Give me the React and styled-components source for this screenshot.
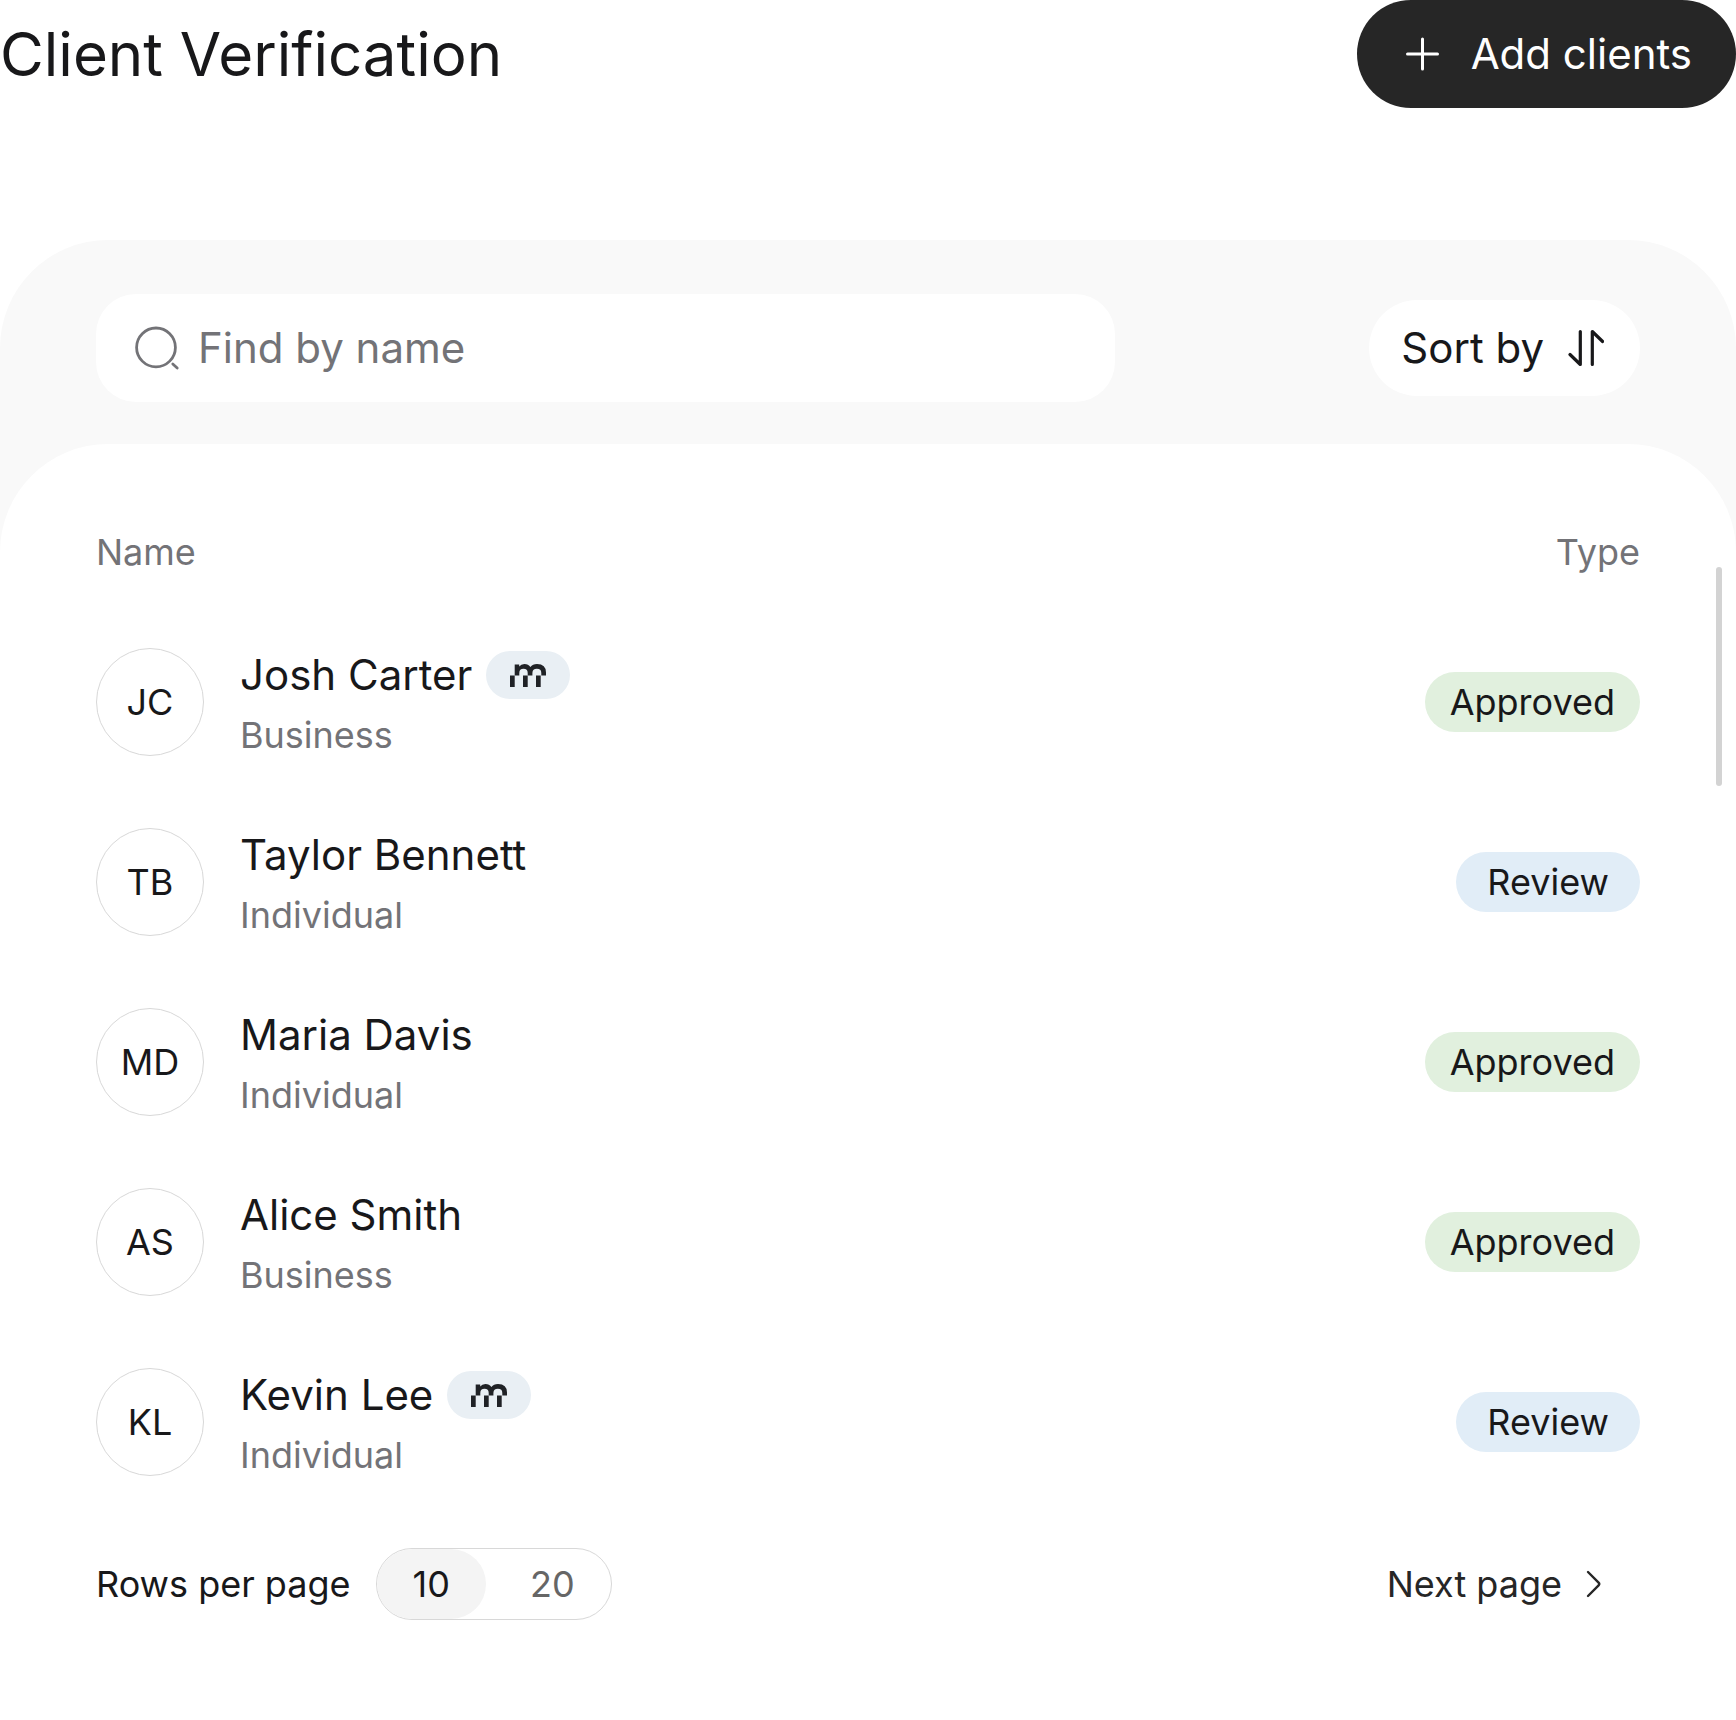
import React, { useState } from 'react';
import styled, { createGlobalStyle } from 'styled-components';

const GlobalStyle = createGlobalStyle`
  *, *::before, *::after {
    box-sizing: border-box;
  }

  body {
    margin: 0;
    background: #ffffff;
    color: #18181a;
    font-family: Inter, "Liberation Sans", sans-serif;
    font-variant-ligatures: none;
  }

  button, input {
    font-family: inherit;
    color: inherit;
    border: none;
    padding: 0;
    margin: 0;
  }

  button {
    cursor: pointer;
    background: none;
  }
`;

const Header = styled.header`
  display: flex;
  align-items: center;
  justify-content: space-between;
  margin-bottom: 132px;
`;

const Title = styled.h1`
  margin: 0;
  font-size: 60px;
  font-weight: 400;
  line-height: 72px;
`;

const AddButton = styled.button`
  display: flex;
  align-items: center;
  gap: 24px;
  height: 108px;
  padding: 0 44px 0 42px;
  border-radius: 54px;
  background: #262626;
  color: #ffffff;
  font-size: 42px;
  line-height: 48px;
  white-space: nowrap;
`;

const Card = styled.section`
  background: #f9f9f9;
  border-radius: 108px 108px 0 0;
`;

const Toolbar = styled.div`
  display: flex;
  align-items: center;
  justify-content: space-between;
  padding: 54px 96px 42px;
`;

const SearchField = styled.label`
  display: flex;
  align-items: center;
  gap: 18px;
  width: 66%;
  height: 108px;
  padding: 0 36px;
  border-radius: 40px;
  background: #ffffff;
  color: #737377;
`;

const SearchInput = styled.input`
  flex: 1;
  min-width: 0;
  background: transparent;
  font-size: 42px;
  line-height: 48px;
  outline: none;

  &::placeholder {
    color: #737377;
    opacity: 1;
  }
`;

const SortButton = styled.button`
  display: flex;
  align-items: center;
  gap: 24px;
  height: 96px;
  padding: 0 36px 0 32px;
  border-radius: 48px;
  background: #ffffff;
  font-size: 42px;
  line-height: 48px;
  white-space: nowrap;
`;

const Panel = styled.div`
  position: relative;
  padding: 84px 96px 100px;
  border-radius: 108px 108px 0 0;
  background: #ffffff;
`;

const ScrollThumb = styled.div`
  position: absolute;
  top: 123px;
  right: 14px;
  width: 6px;
  height: 219px;
  border-radius: 3px;
  background: #d3d3d3;
`;

const Table = styled.table`
  width: 100%;
  border-collapse: collapse;
`;

const HeadCell = styled.th`
  padding: 0 0 36px;
  text-align: ${props => props.$align || 'left'};
  font-size: 36px;
  font-weight: 400;
  line-height: 48px;
  color: #737377;
`;

const Cell = styled.td`
  height: 180px;
  padding: 0;
  vertical-align: middle;
  text-align: ${props => props.$align || 'left'};
`;

const Client = styled.div`
  display: flex;
  align-items: center;
  gap: 36px;
`;

const Avatar = styled.div`
  display: flex;
  align-items: center;
  justify-content: center;
  flex: none;
  width: 108px;
  height: 108px;
  border: 1px solid #d8d8d8;
  border-radius: 50%;
  font-size: 36px;
`;

const ClientText = styled.div`
  display: flex;
  flex-direction: column;
  gap: 12px;
  padding-top: 6px;
`;

const ClientName = styled.div`
  display: flex;
  align-items: center;
  gap: 14px;
  font-size: 42px;
  line-height: 48px;
`;

const ClientKind = styled.div`
  font-size: 36px;
  line-height: 48px;
  color: #737377;
`;

const BrandTag = styled.span`
  display: flex;
  align-items: center;
  justify-content: center;
  width: 84px;
  height: 48px;
  border-radius: 24px;
  background: #e9eff4;
  color: #202226;
`;

const StatusBadge = styled.span`
  display: inline-block;
  padding: 0 ${props => (props.$status === 'Approved' ? 25 : 31)}px;
  border-radius: 30px;
  background: ${props => (props.$status === 'Approved' ? '#e1f0de' : '#e1edf7')};
  font-size: 36px;
  line-height: 60px;
  vertical-align: middle;
`;

const Footer = styled.footer`
  display: flex;
  align-items: center;
  justify-content: space-between;
  padding-top: 36px;
  font-size: 36px;
`;

const RowsPerPage = styled.div`
  display: flex;
  align-items: center;
  gap: 25px;
`;

const Segments = styled.div`
  display: flex;
  gap: 8px;
  height: 72px;
  border: 1px solid #d8d8d8;
  border-radius: 36px;
  overflow: hidden;
`;

const Segment = styled.button`
  padding: 0 36px;
  border-radius: 36px;
  background: ${props => (props.$active ? '#f4f4f4' : 'transparent')};
  color: ${props => (props.$active ? '#18181a' : '#666666')};
  font-size: 36px;
`;

const NextButton = styled.button`
  display: flex;
  align-items: center;
  gap: 8px;
  padding-right: 22px;
  color: #262626;
  font-size: 36px;
`;

const PlusIcon = () => (
  <svg width="48" height="48" viewBox="0 0 48 48" fill="none" stroke="currentColor" strokeWidth="3" strokeLinecap="round">
    <path d="M23.500 9v30M8.500 24h30" />
  </svg>
);

const SearchIcon = () => (
  <svg width="48" height="48" viewBox="0 0 48 48" fill="none" stroke="currentColor" strokeWidth="2.8" strokeLinecap="round">
    <circle cx="24" cy="23.4" r="19.4" />
    <path d="M40.800 40l4.400 4" />
  </svg>
);

const SortIcon = () => (
  <svg width="36" height="38" viewBox="0 0 36 38" fill="none" stroke="currentColor" strokeWidth="3.2" strokeLinecap="round" strokeLinejoin="round">
    <path d="M12.3 2.5v33L2 25.5M24.3 35.5v-33l10.3 10" />
  </svg>
);

const ChevronIcon = () => (
  <svg width="48" height="48" viewBox="0 0 48 48" fill="none" stroke="currentColor" strokeWidth="2.4" strokeLinecap="round" strokeLinejoin="round">
    <path d="M18 12l10.6 10.7q1.3 1.3 0 2.6L18 36" />
  </svg>
);

const BrandIcon = () => (
  <svg width="36" height="23" viewBox="0 0 36 23" fill="currentColor">
    <path d="M0 11.5h4.7V23H0zM13 11.5h4.7V23H13zM26 11.5h4.7V23H26z" />
    <path d="M4.700 .5h4.500v2Q11 0 14.400 0q4 0 6 3Q22.600 0 27 0q9 0 9 8.600v2.900h-4.700V9q0-4.200-4.400-4.200T22.400 9v2.500h-4.700V9q0-4.200-4.200-4.200T9.300 9v2.500H4.700z" />
  </svg>
);

const clients = [
  { initials: 'JC', name: 'Josh Carter', kind: 'Business', status: 'Approved', branded: true },
  { initials: 'TB', name: 'Taylor Bennett', kind: 'Individual', status: 'Review' },
  { initials: 'MD', name: 'Maria Davis', kind: 'Individual', status: 'Approved' },
  { initials: 'AS', name: 'Alice Smith', kind: 'Business', status: 'Approved' },
  { initials: 'KL', name: 'Kevin Lee', kind: 'Individual', status: 'Review', branded: true },
];

const ClientRow = ({ client }) => (
  <tr>
    <Cell>
      <Client>
        <Avatar>{client.initials}</Avatar>
        <ClientText>
          <ClientName>
            {client.name}
            {client.branded && (
              <BrandTag>
                <BrandIcon />
              </BrandTag>
            )}
          </ClientName>
          <ClientKind>{client.kind}</ClientKind>
        </ClientText>
      </Client>
    </Cell>
    <Cell $align="right">
      <StatusBadge $status={client.status}>{client.status}</StatusBadge>
    </Cell>
  </tr>
);

const App = () => {
  const [query, setQuery] = useState('');
  const [pageSize, setPageSize] = useState(10);

  const visible = clients.filter(c => c.name.toLowerCase().includes(query.toLowerCase()));

  return (
    <main>
      <GlobalStyle />
      <Header>
        <Title>Client Verification</Title>
        <AddButton type="button">
          <PlusIcon />
          Add clients
        </AddButton>
      </Header>
      <Card>
        <Toolbar>
          <SearchField htmlFor="client-search">
            <SearchIcon />
            <SearchInput
              id="client-search"
              type="text"
              aria-label="Find by name"
              placeholder="Find by name"
              value={query}
              onChange={e => setQuery(e.target.value)}
            />
          </SearchField>
          <SortButton type="button">
            Sort by
            <SortIcon />
          </SortButton>
        </Toolbar>
        <Panel>
          <ScrollThumb />
          <Table>
            <thead>
              <tr>
                <HeadCell scope="col">Name</HeadCell>
                <HeadCell scope="col" $align="right">Type</HeadCell>
              </tr>
            </thead>
            <tbody>
              {visible.map(client => (
                <ClientRow key={client.initials} client={client} />
              ))}
            </tbody>
          </Table>
          <Footer>
            <RowsPerPage>
              <span id="rows-label">Rows per page</span>
              <Segments role="group" aria-labelledby="rows-label">
                {[10, 20].map(size => (
                  <Segment
                    key={size}
                    type="button"
                    aria-pressed={pageSize === size}
                    $active={pageSize === size}
                    onClick={() => setPageSize(size)}
                  >
                    {size}
                  </Segment>
                ))}
              </Segments>
            </RowsPerPage>
            <NextButton type="button">
              Next page
              <ChevronIcon />
            </NextButton>
          </Footer>
        </Panel>
      </Card>
    </main>
  );
};

export default App;
